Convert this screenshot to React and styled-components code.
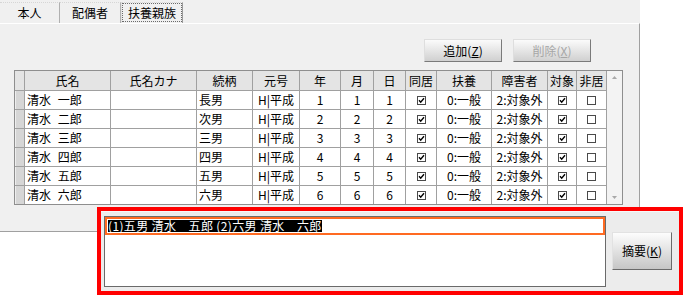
import styled, { createGlobalStyle } from 'styled-components';

const GlobalStyle = createGlobalStyle`
  html, body { margin: 0; padding: 0; background: #fff; }
  body {
    font-family: "Noto Sans CJK JP", "Noto Sans", sans-serif;
    font-size: 12px;
    color: #000;
  }
`;

const COLS = [9, 85, 85, 55, 46, 40, 32, 31, 30, 54, 55, 28, 29];
const HEADERS = ['', '氏名', '氏名カナ', '続柄', '元号', '年', '月', '日', '同居', '扶養', '障害者', '対象', '非居'];
const KANJI = ['一', '二', '三', '四', '五', '六'];
const RELATION = ['長男', '次男', '三男', '四男', '五男', '六男'];

const rows = KANJI.map((k, i) => ({
  name: `清水 ${k}郎`,
  relation: RELATION[i],
  n: i + 1,
}));

function CheckBox({ checked }) {
  return (
    <svg width="9" height="9" viewBox="0 0 9 9">
      <rect x="0.5" y="0.5" width="8" height="8" fill="#fff" stroke="#4a4a4a" />
      {checked && <path d="M2 4.3 L3.7 6.2 L7 2.3" fill="none" stroke="#000" strokeWidth="1.4" />}
    </svg>
  );
}

function Arrow({ down }) {
  return (
    <svg width="5" height="3" viewBox="0 0 5 3">
      <path d={down ? 'M0 0 H5 L2.5 3 Z' : 'M0 3 H5 L2.5 0 Z'} fill="#a8a8a8" />
    </svg>
  );
}

export default function App() {
  return (
    <Screen>
      <GlobalStyle />
      <TabStrip>
        <Tab $w={60}>本人</Tab>
        <Tab $w={61}>配偶者</Tab>
        <Tab $w={62} $active>扶養親族</Tab>
      </TabStrip>
      <Panel>
        <ButtonRow>
          <SmallButton>追加(<u>Z</u>)</SmallButton>
          <SmallButton $disabled>削除(<u>X</u>)</SmallButton>
        </ButtonRow>
        <GridFrame>
          <Grid>
            {HEADERS.map((h, i) => (
              <HeadCell key={i}>{h}</HeadCell>
            ))}
            {rows.map((r) => [
              <RowHead key={`h${r.n}`} />,
              <Cell key={`a${r.n}`} $align="left" $name>{r.name}</Cell>,
              <Cell key={`b${r.n}`} />,
              <Cell key={`c${r.n}`} $align="left">{r.relation}</Cell>,
              <Cell key={`d${r.n}`}>H|平成</Cell>,
              <Cell key={`e${r.n}`}>{r.n}</Cell>,
              <Cell key={`f${r.n}`}>{r.n}</Cell>,
              <Cell key={`g${r.n}`}>{r.n}</Cell>,
              <Cell key={`i${r.n}`}><CheckBox checked /></Cell>,
              <Cell key={`j${r.n}`}>0:一般</Cell>,
              <Cell key={`k${r.n}`}>2:対象外</Cell>,
              <Cell key={`l${r.n}`}><CheckBox checked /></Cell>,
              <Cell key={`m${r.n}`}><CheckBox /></Cell>,
            ])}
          </Grid>
          <ScrollBar>
            <Arrow />
            <Arrow down />
          </ScrollBar>
        </GridFrame>
      </Panel>
      <Summary>
        <MemoBox>
          <MemoLine>
            <Selected>(1)五男 清水　五郎 (2)六男 清水　六郎</Selected>
          </MemoLine>
        </MemoBox>
        <BigButton>摘要(<u>K</u>)</BigButton>
      </Summary>
    </Screen>
  );
}

const Screen = styled.div`
  width: 683px; height: 295px; overflow: hidden;
`;

const TabStrip = styled.div`
  display: flex; align-items: flex-end;
  width: 640px; height: 23px; background: #f0f0f0;
`;

const Tab = styled.div`
  width: ${(p) => p.$w}px; height: 21px; box-sizing: border-box;
  display: flex; align-items: center; justify-content: center;
  border-top: 1px dotted #d6d6d6;
  border-right: 1px solid ${(p) => (p.$active ? '#9a9a9a' : '#b0b0b0')};
  border-left: ${(p) => (p.$active ? '1px solid #e4e4e4' : 'none')};
  background: #f0f0f0;
  outline: ${(p) => (p.$active ? '1px dotted #6a6a6a' : 'none')};
  outline-offset: -2px;
  font-size: 12px; line-height: 1;
`;

const Panel = styled.div`
  width: 640px; height: 209px; box-sizing: border-box;
  background: #f0f0f0;
  border-top: 1px solid #fff;
  border-right: 1px solid #a0a0a0;
  border-bottom: 1px solid #a0a0a0;
  padding: 15px 48px 0 14px;
  display: flex; flex-direction: column; align-items: flex-start;
`;

const ButtonRow = styled.div`
  align-self: stretch;
  display: flex; justify-content: flex-end; gap: 11px;
`;

const SmallButton = styled.div`
  width: 78px; height: 23px; box-sizing: border-box;
  display: flex; align-items: center; justify-content: center;
  background: linear-gradient(#fbfbfb, #d0d0d0);
  border: 1px solid;
  border-color: #dedede #7a7a7a #7a7a7a #dedede;
  color: ${(p) => (p.$disabled ? '#a6a6a6' : '#000')};
  font-size: 12px; line-height: 1;
  u { text-underline-offset: 1px; }
`;

const GridFrame = styled.div`
  margin-top: 8px;
  display: flex;
  border: 1px solid #8e8e8e;
`;

const Grid = styled.div`
  display: grid;
  grid-template-columns: ${COLS.map((c) => `${c}px`).join(' ')};
  grid-template-rows: 19px repeat(6, 18px);
  gap: 1px;
  background: #a0a0a0;
`;

const HeadCell = styled.div`
  background: #e4e4e4;
  display: flex; align-items: center; justify-content: center;
  font-size: 12px; line-height: 1;
`;

const RowHead = styled.div`
  background: #d6d6d6;
  box-shadow: inset 1px 0 #eeeeee;
`;

const Cell = styled.div`
  background: #fff;
  display: flex; align-items: center;
  justify-content: ${(p) => (p.$align === 'left' ? 'flex-start' : 'center')};
  padding-left: ${(p) => (p.$align === 'left' ? '2px' : '0')};
  word-spacing: ${(p) => (p.$name ? '4px' : '0')};
  white-space: pre;
  font-size: 12px; line-height: 1;
  overflow: hidden;
`;

const ScrollBar = styled.div`
  width: 15px;
  border-left: 1px solid #a0a0a0;
  background: #f3f3f3;
  display: flex; flex-direction: column; align-items: center; justify-content: space-between;
  padding: 5px 0 5px;
`;

const Summary = styled.div`
  position: relative; z-index: 1;
  margin: -25px 0 0 97px;
  width: 586px; height: 88px; box-sizing: border-box;
  border: 4px solid #ff0000;
  background: #ececec;
  box-shadow: inset 0 1px #f8f8f8;
  display: flex; align-items: center; gap: 6px;
  padding: 0 0 0 3px;
`;

const MemoBox = styled.div`
  width: 502px; height: 71px; box-sizing: border-box;
  border: 1px solid #6a6a6a;
  background: #fff;
  margin-top: 1px;
`;

const MemoLine = styled.div`
  height: 18px; box-sizing: border-box;
  border: 2px solid #ff6a22;
  padding: 1px 0 0 1px;
  display: flex; align-items: flex-start;
`;

const Selected = styled.span`
  display: inline-block;
  height: 12px; line-height: 12px;
  background: #000; color: #fff;
  font-size: 12px;
  letter-spacing: 0.35px;
  white-space: pre;
`;

const BigButton = styled.div`
  width: 60px; height: 38px; box-sizing: border-box;
  display: flex; align-items: center; justify-content: center;
  background: linear-gradient(#fdfdfd, #c6c6c6);
  border: 1px solid;
  border-color: #e2e2e2 #6a6a6a #6a6a6a #e2e2e2;
  font-size: 12px; line-height: 1;
  u { text-underline-offset: 1px; }
`;
